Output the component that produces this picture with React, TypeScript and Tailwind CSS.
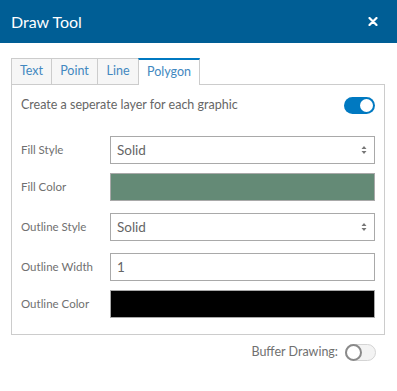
import React from 'react';

const rows = [
  { label: 'Fill Style', kind: 'select', value: 'Solid', mt: 'mt-0' },
  { label: 'Fill Color', kind: 'color', value: '#648a76', mt: 'mt-[9px]' },
  { label: 'Outline Style', kind: 'select', value: 'Solid', mt: 'mt-[12px]' },
  { label: 'Outline Width', kind: 'input', value: '1', mt: 'mt-[12px]' },
  { label: 'Outline Color', kind: 'color', value: '#000000', mt: 'mt-[9px]' },
];

const tabs = [
  { name: 'Text', w: 'w-[40px]' },
  { name: 'Point', w: 'w-[46px]' },
  { name: 'Line', w: 'w-[41px]' },
  { name: 'Polygon', w: 'w-[62px]' },
];

const Toggle: React.FC<{ on: boolean }> = ({ on }) =>
  on ? (
    <div className="w-[31px] h-[17px] rounded-full bg-[#0079c1] flex items-center justify-end pr-[2px]">
      <div className="w-[13px] h-[13px] rounded-full bg-white" />
    </div>
  ) : (
    <div className="w-[31px] h-[17px] rounded-full bg-[#f3f3f3] border border-[#d4d4d4] flex items-center">
      <div className="w-[17px] h-[17px] -ml-px rounded-full bg-white border-2 border-[#8a8a8a]" />
    </div>
  );

export default function App() {
  return (
    <div className="w-[397px] h-[391px] bg-white font-['Lato','Open_Sans',sans-serif] text-[12.5px]">
      <div className="h-[43px] bg-[#005e95] flex items-center justify-between pl-[11px] pr-[19px]">
        <span className="text-white text-[16px]">Draw Tool</span>
        <svg width="10" height="9" viewBox="0 0 10 9">
          <path d="M1.5 1 L8.5 8 M8.5 1 L1.5 8" stroke="white" strokeWidth="2.2" strokeLinecap="round" />
        </svg>
      </div>

      <div className="px-[11px] pt-[15px]">
        <div className="flex h-[26px]">
          {tabs.map((t) =>
            t.name === 'Polygon' ? (
              <div
                key={t.name}
                className={`${t.w} border-t-2 border-t-[#0079c1] border-x border-[#ccc] bg-white text-[#4288c0] flex items-center justify-center -mb-px h-[27px] z-10`}
              >
                {t.name}
              </div>
            ) : (
              <div
                key={t.name}
                className={`${t.w} border-t border-l border-[#ccc] bg-[#f6f6f6] text-[#4288c0] flex items-center justify-center`}
              >
                {t.name}
              </div>
            )
          )}
        </div>

        <div className="border border-[#ccc] w-[374px] px-[9px] pt-[11px] pb-[16px]">
          <div className="flex items-center justify-between h-[19px] text-[#666]">
            <span>Create a seperate layer for each graphic</span>
            <Toggle on />
          </div>
          <div className="flex flex-col mt-[21px]">
            {rows.map((r) => (
              <div key={r.label} className={`flex items-center h-[28px] ${r.mt}`}>
                <span className="w-[89px] text-[#707070] text-[11.5px]">{r.label}</span>
                {r.kind === 'color' ? (
                  <div className="flex-1 h-[28px] border border-[#a9a9a9]" style={{ backgroundColor: r.value }} />
                ) : (
                  <div className="flex-1 h-[28px] border border-[#a9a9a9] flex items-center justify-between pl-[6px] pr-[7px] text-[#666] text-[13.5px]">
                    <span>{r.value}</span>
                    {r.kind === 'select' && (
                      <svg width="6" height="10" viewBox="0 0 6 10">
                        <path d="M0.5 4 L3 1 L5.5 4 Z M0.5 6 L3 9 L5.5 6 Z" fill="#777" />
                      </svg>
                    )}
                  </div>
                )}
              </div>
            ))}
          </div>
        </div>

        <div className="flex items-center justify-end gap-[7px] mt-[8px] pr-[10px] text-[#707070]">
          <span>Buffer Drawing:</span>
          <Toggle on={false} />
        </div>
      </div>
    </div>
  );
}
